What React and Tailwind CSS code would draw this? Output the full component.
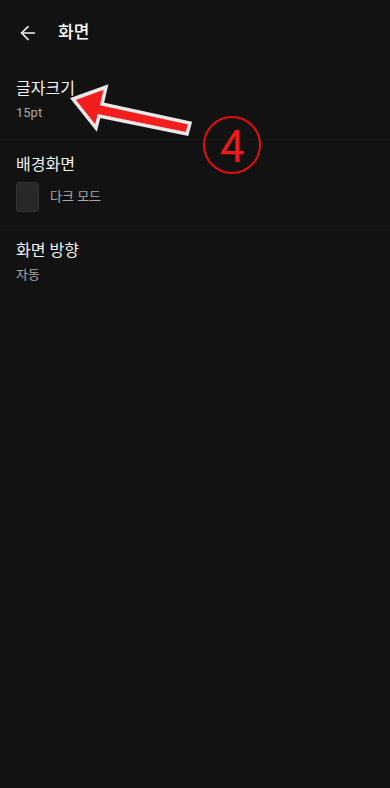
import { ArrowLeft } from "lucide-react"

const font = { fontFamily: '"Roboto", "Noto Sans CJK KR", sans-serif' }

function Item({ title, children, divider = true, bottom = "pb-[13px]" }) {
  return (
    <div className={divider ? "border-b border-[#191919]" : ""}>
      <div className={`px-4 pt-[13px] ${bottom}`}>
        <div className="text-[16px] leading-[24px] text-[#f2f2f2]">{title}</div>
        <div className="mt-[2px]">{children}</div>
      </div>
    </div>
  )
}

function Annotation() {
  return (
    <svg className="absolute left-0 top-0 pointer-events-none" width="390" height="200" viewBox="0 0 390 200">
      <polygon
        points="73,99 106,87 102,104 190,123 187,134 99,116 96,128"
        fill="#f21d1d"
        stroke="#e8e8e8"
        strokeWidth="3.5"
        strokeLinejoin="miter"
      />
      <circle cx="232" cy="145" r="28" fill="none" stroke="#e01010" strokeWidth="2" />
      <text x="232" y="162" textAnchor="middle" fill="#f01818" fontSize="44" fontFamily="Roboto, sans-serif">4</text>
    </svg>
  )
}

export default function App() {
  return (
    <div className="relative w-[390px] h-[788px] bg-[#121212] overflow-hidden" style={font}>
      <div className="flex items-center h-[64px] px-4 pt-[1px]">
        <ArrowLeft size={22} strokeWidth={1.8} className="text-[#f0f0f0] ml-[1px]" />
        <div className="ml-[19px] text-[17px] font-medium text-white">화면</div>
      </div>

      <Item title="글자크기" bottom="pb-[16px]">
        <div className="text-[13px] leading-[20px] text-[#a8a8a8]">15pt</div>
      </Item>

      <Item title="배경화면" bottom="pb-[13px]">
        <div className="flex items-center gap-[11px] mt-[5px]">
          <div className="w-[23px] h-[30px] rounded-[3px] bg-[#282828] border border-[#333]" />
          <div className="text-[13px] text-[#a8a8a8]">다크 모드</div>
        </div>
      </Item>

      <Item title="화면 방향" divider={false}>
        <div className="text-[13px] leading-[20px] text-[#a8a8a8]">자동</div>
      </Item>

      <Annotation />
    </div>
  )
}
